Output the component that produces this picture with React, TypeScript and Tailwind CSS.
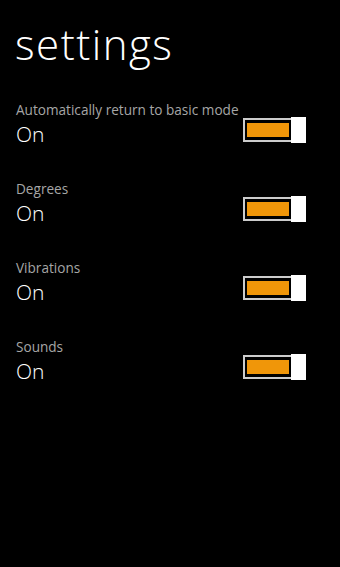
import React from "react";

const rows = ["Automatically return to basic mode", "Degrees", "Vibrations", "Sounds"];

function Toggle() {
  // WP style toggle: bordered track with orange fill, white thumb on the right
  return (
    <div className="flex items-center">
      <div className="w-[48px] h-[24px] border-2 border-r-0 border-[#cccccc] pt-[3px] pb-[3px] pl-[2px] pr-[2px]">
        <div className="h-full w-full bg-[#f09609]" />
      </div>
      <div className="w-[15px] h-[26px] bg-white" />
    </div>
  );
}

export default function App() {
  return (
    <div
      className="w-[340px] h-[567px] bg-black text-white overflow-hidden"
      style={{ fontFamily: '"Open Sans", "Liberation Sans", sans-serif' }}
    >
      <h1 className="pt-[20px] pl-[15px] text-[42px] leading-[48px] font-light tracking-[1.5px]">settings</h1>
      <div className="mt-[31px]">
        {rows.map((label) => (
          <div key={label} className="relative flex justify-between h-[79px] pl-[16px] pr-[34px]">
            <div className="pt-[2px]">
              <div className="text-[13.6px] leading-[18px] text-[#a6a6a6] whitespace-nowrap">{label}</div>
              <div className="mt-[2px] text-[21px] leading-[26px] font-light">On</div>
            </div>
            <div className="mt-[18px]">
              <Toggle />
            </div>
          </div>
        ))}
      </div>
    </div>
  );
}
